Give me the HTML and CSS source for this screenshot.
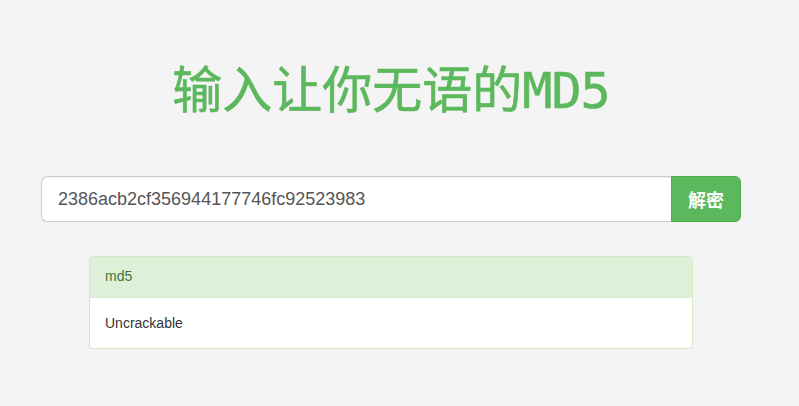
FILE: index.html
```html
<!DOCTYPE html>
<html lang="zh-CN">
<head>
    <meta charset="UTF-8">
    <meta name="viewport" content="width=device-width, initial-scale=1.0">
    <title>输入让你无语的MD5</title>
    <link rel="stylesheet" href="styles.css">
</head>
<body>
    <div class="page">
        <h1 class="title">输入让你无语的<span class="latin">MD5</span></h1>

        <form class="search" onsubmit="return false;">
            <input class="search-input" type="text" value="2386acb2cf356944177746fc92523983">
            <button class="search-btn" type="submit">解密</button>
        </form>

        <div class="panel">
            <div class="panel-heading">md5</div>
            <div class="panel-body">Uncrackable</div>
        </div>
    </div>
</body>
</html>
```

FILE: styles.css
```css
* {
    margin: 0;
    padding: 0;
    box-sizing: border-box;
}

body {
    font-family: "Liberation Sans", Arial, "Noto Sans CJK SC", sans-serif;
    font-size: 14px;
    line-height: 1.42857;
    color: #333;
    background: #f4f4f4;
}

.page {
    width: 782px;
    display: flex;
    flex-direction: column;
    align-items: center;
    padding-top: 53px;
}

.title {
    font-family: "Noto Sans CJK SC", sans-serif;
    font-size: 50px;
    font-weight: 400;
    line-height: 66px;
    color: #5cb85c;
    -webkit-text-stroke: 0.6px #5cb85c;
}

.title .latin {
    font-family: "DejaVu Sans Mono", monospace;
    font-weight: 400;
    letter-spacing: -1px;
}

.search {
    display: flex;
    width: 700px;
    margin-top: 52px;
}

.search-input {
    flex: 1;
    height: 46px;
    padding: 10px 16px;
    font-family: "Liberation Sans", Arial, sans-serif;
    font-size: 18px;
    color: #555;
    background: #fff;
    border: 1px solid #ccc;
    border-right: none;
    border-radius: 6px 0 0 6px;
    box-shadow: inset 0 1px 1px rgba(0,0,0,0.075);
    outline: none;
}

.search-btn {
    width: 70px;
    height: 46px;
    font-family: "Noto Sans CJK SC", sans-serif;
    font-size: 18px;
    font-weight: 700;
    color: #fff;
    background: #5cb85c;
    border: 1px solid #4cae4c;
    border-radius: 0 6px 6px 0;
    cursor: pointer;
}

.panel {
    width: 604px;
    margin-top: 34px;
    background: #fff;
    border: 1px solid #d6e9c6;
    border-radius: 4px;
    box-shadow: 0 1px 1px rgba(0,0,0,0.05);
    overflow: hidden;
}

.panel-heading {
    padding: 10px 15px;
    height: 41px;
    color: #3c763d;
    background: #dff0d8;
    border-bottom: 1px solid #d6e9c6;
}

.panel-body {
    padding: 16px 15px 14px;
}
```
